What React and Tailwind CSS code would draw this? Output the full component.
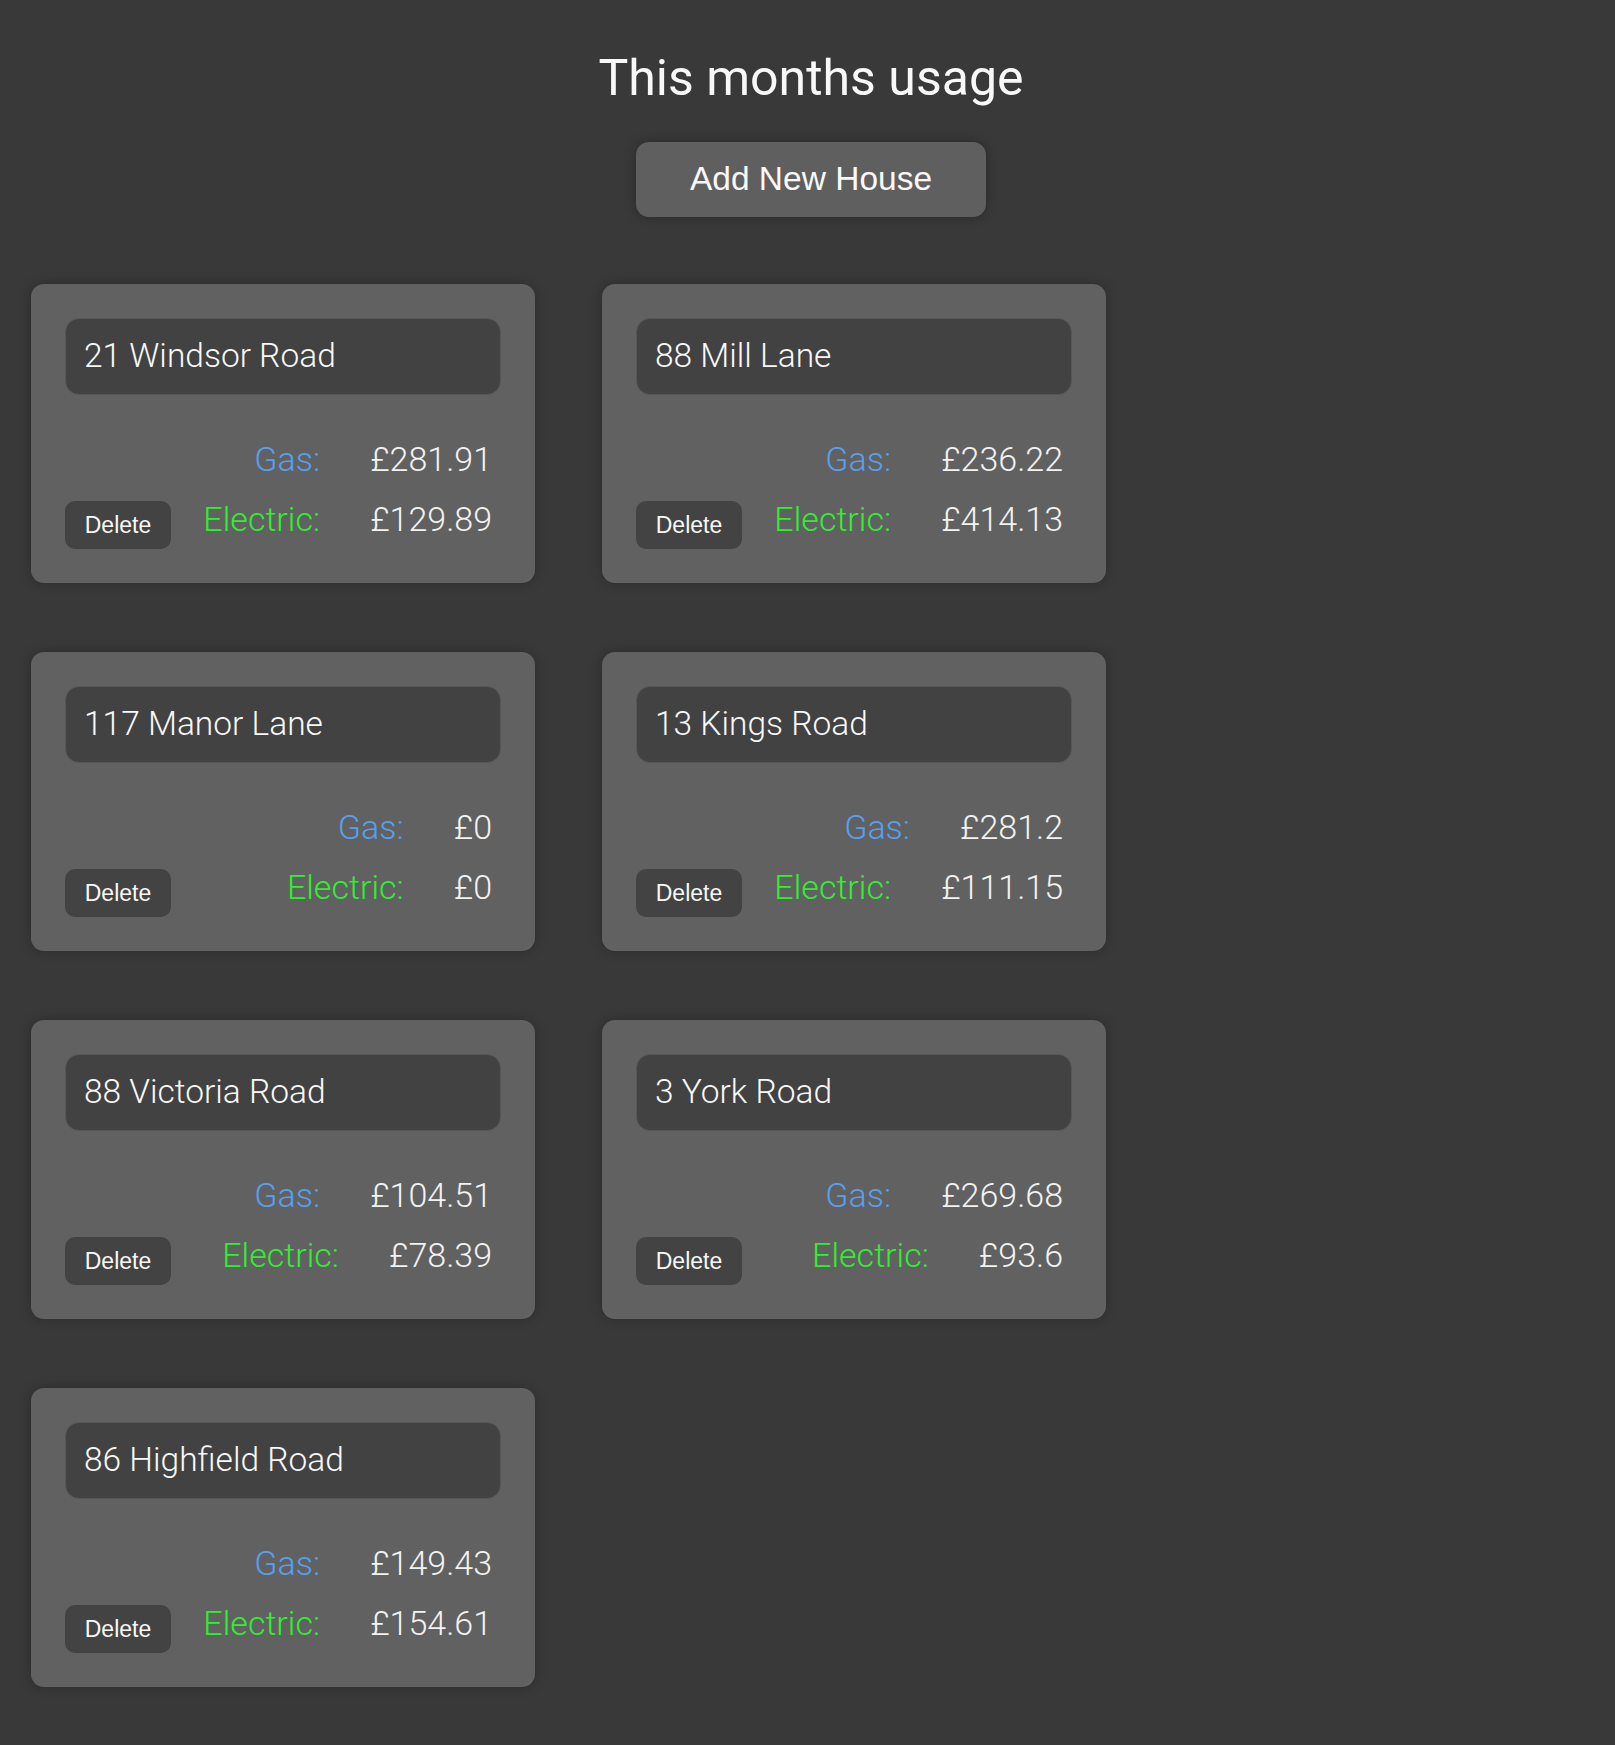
const houses = [
  { name: "21 Windsor Road", gas: "£281.91", electric: "£129.89" },
  { name: "88 Mill Lane", gas: "£236.22", electric: "£414.13" },
  { name: "117 Manor Lane", gas: "£0", electric: "£0" },
  { name: "13 Kings Road", gas: "£281.2", electric: "£111.15" },
  { name: "88 Victoria Road", gas: "£104.51", electric: "£78.39" },
  { name: "3 York Road", gas: "£269.68", electric: "£93.6" },
  { name: "86 Highfield Road", gas: "£149.43", electric: "£154.61" },
];

const UsageRow = ({ label, value, color }) => (
  <div className="h-[60px] flex items-center justify-end gap-[50px]">
    <span className={`font-light ${color}`}>{label}</span>
    <span className="font-light text-[#f2f2f2]">{value}</span>
  </div>
);

const HouseCard = ({ house }) => (
  <div className="bg-[#616161] rounded-[13px] p-[34px] shadow-[0_0_12px_rgba(0,0,0,0.25)] flex flex-col">
    {/* House name */}
    <div className="h-[77px] flex items-center px-[18px] bg-[#424242] border border-[#575757] rounded-[14px] text-[33.5px] font-light text-[#f8f8f8]">
      {house.name}
    </div>

    {/* Usage + delete */}
    <div className="mt-[34px] h-[120px] flex items-end justify-between">
      <button className="w-[106px] h-[48px] rounded-[10px] bg-[#434343] text-[23px] text-[#f8f8f8] font-['Liberation_Sans',Arial,sans-serif] flex items-center justify-center">
        Delete
      </button>
      <div className="flex flex-col pr-[9px] text-[34px] leading-none">
        <UsageRow label="Gas:" value={house.gas} color="text-[#589ff0]" />
        <UsageRow label="Electric:" value={house.electric} color="text-[#2ff02f]" />
      </div>
    </div>
  </div>
);

export default function App() {
  return (
    <div className="min-h-screen bg-[#393939] font-['Roboto',sans-serif] text-white pb-[59px]">
      {/* Header */}
      <div className="flex flex-col items-center pl-[7px] pt-[48px]">
        <h1 className="text-[50px] leading-[60px] text-[#f8f8f8]">This months usage</h1>
        <button className="mt-[34px] w-[350px] h-[75px] rounded-[13px] bg-[#5f5f5f] shadow-[0_0_12px_rgba(0,0,0,0.3)] text-[33.5px] text-[#f8f8f8] font-['Liberation_Sans',Arial,sans-serif] flex items-center justify-center">
          Add New House
        </button>
      </div>

      {/* Houses */}
      <div className="mt-[67px] pl-[31px] grid grid-cols-[504px_504px] gap-x-[67px] gap-y-[69px]">
        {houses.map((h) => (
          <HouseCard key={h.name} house={h} />
        ))}
      </div>
    </div>
  );
}
